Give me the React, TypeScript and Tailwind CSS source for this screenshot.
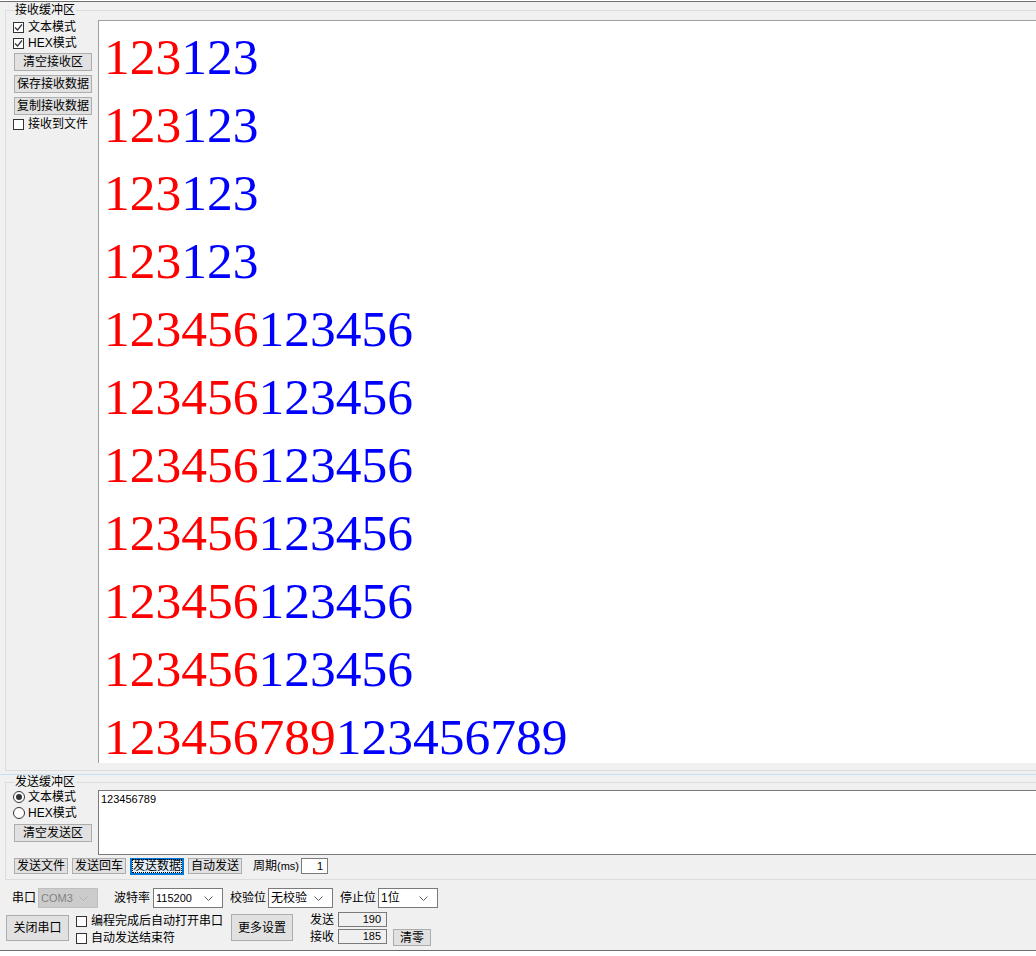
import React from "react";

function Check({ checked, label }: { checked?: boolean; label: string }) {
  return (
    <div className="flex items-center h-[14px] gap-[4px]">
      <span className="w-[11px] h-[11px] border border-[#333333] bg-white flex items-center justify-center shrink-0">
        {checked && (
          <svg width="9" height="9" viewBox="0 0 9 9">
            <polyline points="1,4.5 3.5,7 8,1.5" fill="none" stroke="#333333" strokeWidth="1.2" />
          </svg>
        )}
      </span>
      <span className="leading-[14px] whitespace-nowrap">{label}</span>
    </div>
  );
}

function Radio({ checked, label }: { checked?: boolean; label: string }) {
  return (
    <div className="flex items-center h-[14px] gap-[3px]">
      <span className="w-[12px] h-[12px] rounded-full border border-[#333333] bg-white flex items-center justify-center shrink-0">
        {checked && <span className="w-[6px] h-[6px] rounded-full bg-[#333333]" />}
      </span>
      <span className="leading-[14px] whitespace-nowrap">{label}</span>
    </div>
  );
}

function Btn({ children, className }: { children: React.ReactNode; className: string }) {
  return (
    <div
      className={
        "flex items-center justify-center bg-[#e1e1e1] border border-[#adadad] leading-none whitespace-nowrap shrink-0 " +
        className
      }
    >
      {children}
    </div>
  );
}

function Chevron({ color }: { color: string }) {
  return (
    <svg width="9" height="5" viewBox="0 0 9 5" className="shrink-0">
      <polyline points="0.5,0.5 4.5,4.5 8.5,0.5" fill="none" stroke={color} strokeWidth="1" />
    </svg>
  );
}

function Combo({ value, className, disabled }: { value: string; className: string; disabled?: boolean }) {
  return (
    <div
      className={
        "flex items-center justify-between h-[20px] border pl-[2px] pr-[9px] shrink-0 " +
        (disabled ? "border-[#bfbfbf] bg-[#cccccc] text-[#838383] " : "border-[#7a7a7a] bg-white ") +
        className
      }
    >
      <span className="leading-[14px] whitespace-nowrap">{value}</span>
      <Chevron color={disabled ? "#b0b0b0" : "#5a5a5a"} />
    </div>
  );
}

const lines: [string, string][] = [
  ["123", "123"],
  ["123", "123"],
  ["123", "123"],
  ["123", "123"],
  ["123456", "123456"],
  ["123456", "123456"],
  ["123456", "123456"],
  ["123456", "123456"],
  ["123456", "123456"],
  ["123456", "123456"],
  ["123456789", "123456789"],
];

export default function App() {
  return (
    <div className="w-[1036px] h-[956px] bg-[#f0f0f0] overflow-hidden flex flex-col text-[12px] text-black font-['Liberation_Sans','Noto_Sans_CJK_SC',sans-serif]">
      <div className="h-px bg-white shrink-0" />
      <div className="h-px bg-[#6d6d6d] shrink-0" />

      {/* Receive group */}
      <div className="relative ml-[5px] mt-[8px] h-[761px] shrink-0 border-l border-t border-b border-[#dcdcdc] flex">
        <div className="absolute left-[8px] -top-[8px] px-px bg-[#f0f0f0] leading-[14px]">接收缓冲区</div>
        <div className="w-[92px] shrink-0 flex flex-col pl-[7px]">
          <div className="mt-[9px]">
            <Check checked label="文本模式" />
          </div>
          <div className="mt-[2px]">
            <Check checked label="HEX模式" />
          </div>
          <Btn className="mt-[3px] ml-px w-[78px] h-[18px]">清空接收区</Btn>
          <Btn className="mt-[4px] ml-px w-[78px] h-[18px]">保存接收数据</Btn>
          <Btn className="mt-[4px] ml-px w-[78px] h-[18px]">复制接收数据</Btn>
          <div className="mt-[2px]">
            <Check label="接收到文件" />
          </div>
        </div>
        <div className="flex-1 mt-[9px] h-[743px] bg-white border-l border-t border-[#a0a0a0] pt-[2px] pl-[5px]">
          {lines.map((l, i) => (
            <div key={i} className="text-[51.5px] leading-[68px] whitespace-nowrap font-['Liberation_Serif',serif]">
              <span className="text-[#ff0000]">{l[0]}</span>
              <span className="text-[#0000ff]">{l[1]}</span>
            </div>
          ))}
        </div>
      </div>

      <div className="mt-[3px] h-px bg-[#c4e0f6] shrink-0" />

      {/* Send group */}
      <div className="relative ml-[5px] mt-[7px] h-[98px] shrink-0 border-l border-t border-b border-[#dcdcdc] flex flex-col">
        <div className="absolute left-[8px] -top-[8px] px-px bg-[#f0f0f0] leading-[14px]">发送缓冲区</div>
        <div className="flex">
          <div className="w-[92px] shrink-0 flex flex-col pl-[7px]">
            <div className="mt-[7px]">
              <Radio checked label="文本模式" />
            </div>
            <div className="mt-[2px]">
              <Radio label="HEX模式" />
            </div>
            <Btn className="mt-[4px] ml-px w-[78px] h-[18px]">清空发送区</Btn>
          </div>
          <div className="flex-1 mt-[7px] h-[65px] bg-white border-l border-t border-b border-[#7a7a7a] pt-[2px] pl-[2px] text-[11px] leading-[13px]">
            123456789
          </div>
        </div>
        <div className="flex items-center mt-[3px] h-[16px] pl-[8px]">
          <Btn className="w-[54px] h-[16px]">发送文件</Btn>
          <Btn className="ml-[4px] w-[54px] h-[16px]">发送回车</Btn>
          <div className="ml-[4px] w-[54px] h-[17px] shrink-0 flex items-center justify-center bg-[#e5f1fb] border-2 border-[#0078d7]">
            <span className="leading-[12px] outline outline-1 outline-dotted outline-black whitespace-nowrap">发送数据</span>
          </div>
          <Btn className="ml-[4px] w-[54px] h-[16px]">自动发送</Btn>
          <span className="ml-[11px] whitespace-nowrap leading-[14px]">
            周期<span className="text-[11px]">(ms)</span>
          </span>
          <div className="ml-[2px] w-[27px] h-[16px] bg-white border border-[#7a7a7a] flex items-center justify-end pr-[4px] text-[11px] leading-none">
            1
          </div>
        </div>
      </div>

      {/* Bottom controls */}
      <div className="h-[70px] shrink-0 flex flex-col">
        <div className="flex items-center mt-[8px] h-[20px]">
          <span className="ml-[12px] leading-[14px] whitespace-nowrap">串口</span>
          <Combo disabled value="COM3" className="ml-[2px] w-[60px] text-[11px]" />
          <span className="ml-[16px] leading-[14px] whitespace-nowrap">波特率</span>
          <Combo value="115200" className="ml-[3px] w-[70px] text-[11px]" />
          <span className="ml-[7px] leading-[14px] whitespace-nowrap">校验位</span>
          <Combo value="无校验" className="ml-[2px] w-[65px]" />
          <span className="ml-[7px] leading-[14px] whitespace-nowrap">停止位</span>
          <Combo value="1位" className="ml-[2px] w-[60px]" />
        </div>
        <div className="flex items-start mt-[4px]">
          <Btn className="ml-[6px] mt-[3px] w-[63px] h-[26px]">关闭串口</Btn>
          <div className="ml-[7px] mt-[2px] flex flex-col gap-[3px]">
            <Check label="编程完成后自动打开串口" />
            <Check label="自动发送结束符" />
          </div>
          <Btn className="ml-[8px] mt-[2px] w-[62px] h-[27px]">更多设置</Btn>
          <div className="ml-[17px] flex flex-col gap-[2px]">
            <div className="flex items-center h-[15px]">
              <span className="w-[28px] leading-[14px] whitespace-nowrap">发送</span>
              <div className="w-[49px] h-[15px] border border-[#7a7a7a] bg-[#f0f0f0] flex items-center justify-end pr-[5px] text-[11px] leading-none">
                190
              </div>
            </div>
            <div className="flex items-center h-[15px]">
              <span className="w-[28px] leading-[14px] whitespace-nowrap">接收</span>
              <div className="w-[49px] h-[15px] border border-[#7a7a7a] bg-[#f0f0f0] flex items-center justify-end pr-[5px] text-[11px] leading-none">
                185
              </div>
            </div>
          </div>
          <Btn className="ml-[6px] mt-[17px] w-[38px] h-[17px]">清零</Btn>
        </div>
      </div>
      <div className="h-px bg-[#6d6d6d] shrink-0" />
      <div className="flex-1 bg-white" />
    </div>
  );
}
